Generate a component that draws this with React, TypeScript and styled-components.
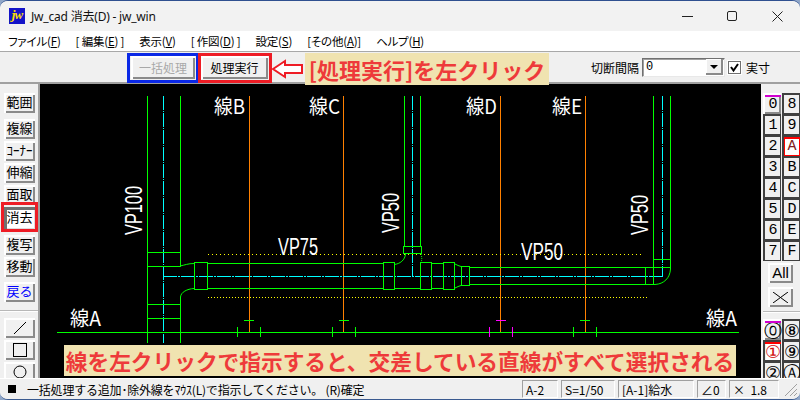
import styled, { createGlobalStyle } from 'styled-components'

const UI_FONT = `"Noto Sans CJK JP", "Liberation Sans", sans-serif`
const FACE = '#f0f0f0'

const GlobalStyle = createGlobalStyle`
  html, body {
    margin: 0;
    padding: 0;
    width: 800px;
    height: 400px;
    overflow: hidden;
    background: #8fa6c8;
  }
  * {
    box-sizing: border-box;
  }
`

const Window = styled.div`
  position: relative;
  width: 800px;
  height: 400px;
  display: flex;
  flex-direction: column;
  overflow: hidden;
  background: ${FACE};
  border-radius: 8px;
  border-top: 1px solid #2f5090;
  border-bottom: 1px solid #3a5a90;
  font-family: ${UI_FONT};
  font-size: 12px;
  color: #000;
`

const TitleBar = styled.div`
  height: 30px;
  flex: none;
  display: flex;
  align-items: center;
  padding-left: 9px;
  background: #f2f2f2;
`

const AppIcon = styled.div`
  width: 16px;
  height: 16px;
  background: #1414c8;
  color: #ffe000;
  font: italic bold 13px/14px "Liberation Serif", serif;
  text-align: center;
  letter-spacing: -1px;
`

const Title = styled.div`
  margin-left: 6px;
  font-family: "Noto Sans", "Noto Sans CJK JP", sans-serif;
  font-size: 12px;
  letter-spacing: -0.2px;
  color: #111;
  flex: 1;
`

const WinButtons = styled.div`
  display: flex;
  align-items: center;
  gap: 34px;
  padding-right: 17px;

  svg {
    display: block;
  }
`

const MenuBar = styled.div`
  height: 21px;
  flex: none;
  display: flex;
  align-items: center;
  gap: 15px;
  padding-left: 8px;
  background: #fff;
  border-bottom: 1px solid #a8a8a8;
  font-size: 11.5px;
  font-feature-settings: "palt";
  letter-spacing: -0.2px;
`

const MenuItem = styled.span`
  u {
    text-underline-offset: 1px;
  }
`

const ToolBar = styled.div`
  height: 32px;
  flex: none;
  display: flex;
  align-items: center;
  padding-left: 131px;
  background: ${FACE};
  border-bottom: 2px solid #a0a0a0;
`

const RaisedBox = styled.button<{ $disabled?: boolean }>`
  padding: 0;
  font-family: ${UI_FONT};
  background: ${FACE};
  border: none;
  color: ${({ $disabled }) => ($disabled ? '#a8a8a8' : '#000')};
  box-shadow: inset 2px 2px 0 #fff, inset -2px -2px 0 #8a8a8a;
`

const CommandButton = styled(RaisedBox)<{ $w: number }>`
  width: ${({ $w }) => $w}px;
  height: 23px;
  font-size: 12px;
  margin-right: 6px;
`

const IntervalGroup = styled.div`
  margin-left: auto;
  display: flex;
  align-items: center;
  padding-right: 30px;
`

const FieldLabel = styled.span`
  font-size: 12px;
  margin-right: 3px;
`

const Combo = styled.div`
  width: 83px;
  height: 19px;
  display: flex;
  align-items: center;
  justify-content: space-between;
  padding-left: 3px;
  background: #fff;
  border: 1px solid;
  border-color: #707070 #e8e8e8 #e8e8e8 #707070;
  box-shadow: inset 1px 1px 0 #a0a0a0;
  font: 12px "Liberation Mono", monospace;
`

const ComboArrow = styled.div`
  width: 17px;
  height: 16px;
  margin-right: 1px;
  display: flex;
  align-items: center;
  justify-content: center;
  background: ${FACE};
  box-shadow: inset -2px -2px 0 #8a8a8a, inset 1px 1px 0 #fff;

  &::after {
    content: '';
    border-left: 4px solid transparent;
    border-right: 4px solid transparent;
    border-top: 4px solid #000;
  }
`

const Check = styled.div`
  width: 13px;
  height: 13px;
  margin: 0 5px 0 3px;
  background: #fff;
  border: 1px solid #707070;
  box-shadow: 0 0 0 1px #fff;

  svg {
    display: block;
  }
`

const Main = styled.div`
  flex: 1;
  min-height: 0;
  display: flex;
`

const SideBar = styled.div<{ $w: number }>`
  width: ${({ $w }) => $w}px;
  flex: none;
  display: flex;
  flex-direction: column;
  padding-top: 9px;
  overflow: hidden;
  background: ${FACE};
`

const LeftBar = styled(SideBar)`
  align-items: flex-start;
  padding-left: 4px;
  border-right: 2px solid #a0a0a0;
`

const ToolGroup = styled.div<{ $mb: number }>`
  display: flex;
  flex-direction: column;
  gap: 2px;
  margin-bottom: ${({ $mb }) => $mb}px;
`

const ToolButton = styled(RaisedBox)<{ $active?: boolean; $blue?: boolean }>`
  width: 31px;
  height: ${({ $active }) => ($active ? 22 : 20)}px;
  flex: none;
  padding-bottom: 3px;
  font-size: 13px;
  line-height: 17px;
  white-space: nowrap;
  color: ${({ $blue }) => ($blue ? '#0000ff' : '#000')};
  background: ${({ $active }) => ($active ? '#fff' : FACE)};
  box-shadow: ${({ $active }) =>
    $active
      ? 'inset 3px 3px 0 #707070, inset -1px -1px 0 #ddd'
      : 'inset 2px 2px 0 #fff, inset -2px -2px 0 #8a8a8a'};
  display: flex;
  align-items: center;
  justify-content: center;
`

const Separator = styled.div<{ $mb: number }>`
  flex: none;
  align-self: stretch;
  height: 2px;
  margin-bottom: ${({ $mb }) => $mb}px;
  background: #b8b8b8;
  border-bottom: 1px solid #fff;
`

const LeftSeparator = styled(Separator)`
  margin-left: -4px;
`

const DrawButton = styled(RaisedBox)`
  width: 31px;
  height: 20px;
  flex: none;
  display: flex;
  align-items: center;
  justify-content: center;

  svg {
    display: block;
  }
`

const Canvas = styled.div`
  flex: 1;
  min-width: 0;
  background: #000;

  svg {
    display: block;
  }
`

const RightBar = styled(SideBar)`
  padding-left: 2px;
  align-items: center;
`

const LayerGrid = styled.div<{ $mb: number }>`
  display: grid;
  grid-template-columns: 18px 18px;
  grid-auto-rows: 21px;
  column-gap: 1px;
  margin-bottom: ${({ $mb }) => $mb}px;
  align-self: flex-start;
`

const LayerKey = styled.div<{ $raised?: boolean; $bar?: string; $red?: boolean; $round?: boolean; $pressed?: boolean }>`
  position: relative;
  display: flex;
  align-items: center;
  justify-content: center;
  background: ${({ $red, $pressed }) => ($red || $pressed ? '#fff' : FACE)};
  font-family: ${({ $round }) => ($round ? `"DejaVu Sans", sans-serif` : `"Liberation Mono", monospace`)};
  font-size: ${({ $round }) => ($round ? 18 : 15)}px;
  line-height: 15px;
  color: ${({ $pressed, $red }) => ($pressed ? '#d01010' : $red ? '#802020' : '#000')};
  border-top: 2px solid ${({ $raised }) => ($raised ? '#fff' : '#404040')};
  border-left: 2px solid ${({ $raised }) => ($raised ? '#fff' : '#404040')};
  box-shadow: ${({ $raised, $red }) =>
    $raised
      ? 'inset -2px -2px 0 #8a8a8a'
      : $red
        ? 'inset 0 0 0 1px #f00'
        : 'inset -1px -1px 0 #404040, inset 1px 1px 0 #f0f0f0'};

  &::before {
    content: '';
    display: ${({ $bar }) => ($bar ? 'block' : 'none')};
    position: absolute;
    left: 0;
    right: 0;
    top: 0;
    height: 2px;
    background: ${({ $bar }) => $bar};
  }
`

const WideKey = styled(RaisedBox)`
  width: 25px;
  height: 20px;
  flex: none;
  margin: 0 0 4px 5px;
  align-self: flex-start;
  font-size: 15px;
  line-height: 18px;
  display: flex;
  align-items: center;
  justify-content: center;
  font-family: "Liberation Sans", sans-serif;

  svg {
    display: block;
  }
`

const StatusBar = styled.div`
  height: 21px;
  flex: none;
  display: flex;
  align-items: center;
  padding-left: 8px;
  background: ${FACE};
  border-top: 1px solid #fff;
  font-size: 12px;
`

const Bullet = styled.div`
  width: 8px;
  height: 8px;
  margin-right: 11px;
  background: #000;
`

const StatusText = styled.div`
  flex: 1;
  white-space: pre;
  letter-spacing: -0.2px;
`

const StatusCell = styled.div<{ $w: number }>`
  width: ${({ $w }) => $w}px;
  height: 18px;
  margin-right: 3px;
  padding-left: 3px;
  display: flex;
  align-items: center;
  white-space: pre;
  border-top: 1px solid #a0a0a0;
  border-left: 1px solid #a0a0a0;
  border-right: 1px solid #fff;
  border-bottom: 1px solid #fff;
`

const Grip = styled.div`
  width: 16px;
  height: 16px;
  margin-right: 2px;

  svg {
    display: block;
  }
`

// annotations pasted on top of the screenshot
const Frame = styled.div<{ $color: string; $x: number; $y: number; $w: number; $h: number }>`
  position: absolute;
  left: ${({ $x }) => $x}px;
  top: ${({ $y }) => $y}px;
  width: ${({ $w }) => $w}px;
  height: ${({ $h }) => $h}px;
  border: 3px solid ${({ $color }) => $color};
  pointer-events: none;
`

const Note = styled.div<{ $x: number; $y: number; $w: number; $h: number; $size: number }>`
  position: absolute;
  left: ${({ $x }) => $x}px;
  top: ${({ $y }) => $y}px;
  width: ${({ $w }) => $w}px;
  height: ${({ $h }) => $h}px;
  display: flex;
  align-items: center;
  justify-content: center;
  white-space: nowrap;
  background: #f0e3b0;
  color: #ee3a3a;
  font-family: ${UI_FONT};
  font-weight: 700;
  font-size: ${({ $size }) => $size}px;
`

const ArrowMark = styled.svg`
  position: absolute;
  left: 270px;
  top: 57px;
`

const CadText = styled.text`
  fill: #fff;
  font-family: ${UI_FONT};
  font-size: 20px;
`

const PipeText = styled.text`
  fill: #fff;
  font-family: "Liberation Sans", sans-serif;
  font-size: 24px;
`

const GREEN = '#00ff00'
const CYAN = '#00ffff'
const ORANGE = '#ff8000'
const YELLOW = '#ffff00'
const MAGENTA = '#ff00ff'

const greenPaths = [
  // left riser
  'M147.5 96V343', 'M180.5 96V266', 'M180.5 297V343',
  'M147.5 252.5H180.5', 'M147.5 266.5H180.5', 'M147.5 304.5H180.5', 'M147.5 318.5H180.5',
  // VP75 run
  'M207 263.5H383', 'M207 288.5H383', 'M394 288.5H420', 'M432 263.5H443', 'M432 288.5H443',
  // middle riser
  'M404.5 96V246', 'M420.5 96V246', 'M420.5 263V264',
  // VP50 run
  'M469 267.5H670', 'M469 284.5H655',
  'M645.5 267V284', 'M653.5 96V284', 'M670.5 96V269', 'M653.5 259.5H670.5',
  // baseline
  'M57 332.5H739',
  // ticks
  'M244 320.5H254', 'M237.5 327V337', 'M260.5 327V337',
  'M339 320.5H349', 'M332.5 327V337', 'M355.5 327V337',
  'M580 320.5H590', 'M573.5 327V337', 'M596.5 327V337',
]

const greenCurves = [
  'M180 266 C185 265 188 263.5 194 263.5',
  'M180.5 297 C181 292 187 289 194 288.5',
  'M405.5 254 C405 260 400 264 394 264.5',
  'M655 284.5 C664 284 670 278 670.5 269',
  'M455 264 C457 265 459 266 461 266.5',
  'M455 288 C457 287 459 286 461 285.5',
]

const greenRects = [
  [194.5, 262.5, 13, 27],
  [383.5, 262.5, 11, 27],
  [420.5, 262.5, 11, 27],
  [443.5, 262.5, 11, 27],
  [461.5, 266.5, 8, 19],
  [403.5, 246.5, 18, 7],
]

const orangeX = [249.5, 343.5, 500.5, 585.5]

const CadDrawing = () => (
  <svg width={721} height={294} viewBox="40 84 721 294" fill="none">
    <g shapeRendering="crispEdges">
      {orangeX.map((x) => <path key={x} d={`M${x} 96V332`} stroke={ORANGE} />)}
      <path d="M163.5 96V343M412.5 96V276M662.5 96V276" stroke={CYAN} strokeDasharray="14 1 1 1" />
      <path d="M163 276.5H663" stroke={CYAN} strokeDasharray="14 1 2 1" />
      <path d="M208 254.5H644" stroke={YELLOW} strokeDasharray="1 3" />
      <path d="M208 297.5H647" stroke={YELLOW} strokeDasharray="1 2" />
      {greenPaths.map((d) => <path key={d} d={d} stroke={GREEN} />)}
      {greenRects.map(([x, y, w, h]) => (
        <rect key={x} x={x} y={y} width={w} height={h} stroke={GREEN} />
      ))}
      <path d="M496 320.5H506M489.5 327V337M512.5 327V337" stroke={MAGENTA} />
    </g>
    {greenCurves.map((d) => <path key={d} d={d} stroke={GREEN} />)}
    <path d="M421 254C422 257 422 260 421 263" stroke={GREEN} strokeDasharray="1 1" />

    <CadText x={214} y={114} textLength={31} lengthAdjust="spacingAndGlyphs">線B</CadText>
    <CadText x={309} y={114} textLength={31} lengthAdjust="spacingAndGlyphs">線C</CadText>
    <CadText x={466} y={114} textLength={31} lengthAdjust="spacingAndGlyphs">線D</CadText>
    <CadText x={552} y={114} textLength={30} lengthAdjust="spacingAndGlyphs">線E</CadText>
    <CadText x={70} y={326} textLength={31} lengthAdjust="spacingAndGlyphs">線A</CadText>
    <CadText x={706} y={326} textLength={31} lengthAdjust="spacingAndGlyphs">線A</CadText>

    <PipeText x={278} y={255} textLength={40} lengthAdjust="spacingAndGlyphs">VP75</PipeText>
    <PipeText x={521} y={260} textLength={42} lengthAdjust="spacingAndGlyphs">VP50</PipeText>
    <PipeText x={142} y={235} transform="rotate(-90 142 235)" textLength={49} lengthAdjust="spacingAndGlyphs">VP100</PipeText>
    <PipeText x={399} y={233} transform="rotate(-90 399 233)" textLength={40} lengthAdjust="spacingAndGlyphs">VP50</PipeText>
    <PipeText x={648} y={235} transform="rotate(-90 648 235)" textLength={40} lengthAdjust="spacingAndGlyphs">VP50</PipeText>
  </svg>
)

const layerRows = [
  ['0', '8'], ['1', '9'], ['2', 'A'], ['3', 'B'],
  ['4', 'C'], ['5', 'D'], ['6', 'E'], ['7', 'F'],
]

const menu = [
  ['ファイル(', 'F', ')'], ['[ 編集(', 'E', ') ]'], ['表示(', 'V', ')'], ['[ 作図(', 'D', ') ]'],
  ['設定(', 'S', ')'], ['[その他(', 'A', ')]'], ['ヘルプ(', 'H', ')'],
]

const App = (): JSX.Element => (
  <Window>
    <GlobalStyle />
    <TitleBar>
      <AppIcon>jw</AppIcon>
      <Title>Jw_cad 消去(D) - jw_win</Title>
      <WinButtons>
        <svg width={11} height={11} stroke="#222"><path d="M0 5.5H11" /></svg>
        <svg width={11} height={11} fill="none" stroke="#222"><rect x={0.5} y={0.5} width={9} height={9} rx={1.5} /></svg>
        <svg width={11} height={11} stroke="#222"><path d="M0.5 0.5L10.5 10.5M10.5 0.5L0.5 10.5" /></svg>
      </WinButtons>
    </TitleBar>
    <MenuBar>
      {menu.map(([a, k, b]) => (
        <MenuItem key={k}>{a}<u>{k}</u>{b}</MenuItem>
      ))}
    </MenuBar>
    <ToolBar>
      <CommandButton $w={64} $disabled>一括処理</CommandButton>
      <CommandButton $w={67}>処理実行</CommandButton>
      <IntervalGroup>
        <FieldLabel>切断間隔</FieldLabel>
        <Combo>0<ComboArrow /></Combo>
        <Check>
          <svg width={11} height={11} fill="none" stroke="#000" strokeWidth={2}><path d="M2 5L4.5 8.5L9 2" /></svg>
        </Check>
        <span>実寸</span>
      </IntervalGroup>
    </ToolBar>
    <Main>
      <LeftBar $w={40}>
        <ToolGroup $mb={6}><ToolButton>範囲</ToolButton></ToolGroup>
        <ToolGroup $mb={6}>
          <ToolButton>複線</ToolButton>
          <ToolButton>ｺｰﾅｰ</ToolButton>
          <ToolButton>伸縮</ToolButton>
          <ToolButton>面取</ToolButton>
          <ToolButton $active>消去</ToolButton>
        </ToolGroup>
        <ToolGroup $mb={5}>
          <ToolButton>複写</ToolButton>
          <ToolButton>移動</ToolButton>
        </ToolGroup>
        <ToolGroup $mb={8}><ToolButton $blue>戻る</ToolButton></ToolGroup>
        <LeftSeparator $mb={6} />
        <ToolGroup $mb={0}>
          <DrawButton>
            <svg width={16} height={14} stroke="#000"><path d="M2 13L14 1" /></svg>
          </DrawButton>
          <DrawButton>
            <svg width={16} height={14} fill="none" stroke="#000"><rect x={1.5} y={0.5} width={13} height={13} /></svg>
          </DrawButton>
          <DrawButton>
            <svg width={16} height={14} fill="none" stroke="#000"><circle cx={8} cy={7} r={6} /></svg>
          </DrawButton>
        </ToolGroup>
      </LeftBar>
      <Canvas><CadDrawing /></Canvas>
      <RightBar $w={39}>
        <LayerGrid $mb={2}>
          {layerRows.flat().map((c) => (
            <LayerKey
              key={c}
              $raised={c === '0'}
              $bar={c === '0' ? '#d000d0' : c === 'A' ? '#ff0000' : undefined}
              $red={c === 'A'}
            >
              {c}
            </LayerKey>
          ))}
        </LayerGrid>
        <WideKey>All</WideKey>
        <WideKey>
          <svg width={15} height={11} stroke="#000"><path d="M0 0L15 11M15 0L0 11" /></svg>
        </WideKey>
        <Separator $mb={6} />
        <LayerGrid $mb={0}>
          {['⓪', '⑧', '①', '⑨', '②', 'Ⓐ'].map((c) => (
            <LayerKey
              key={c}
              $round
              $raised={c === '⓪'}
              $pressed={c === '①'}
              $bar={c === '⓪' ? '#d000d0' : c === '①' ? '#ff0000' : undefined}
            >
              {c}
            </LayerKey>
          ))}
        </LayerGrid>
      </RightBar>
    </Main>
    <StatusBar>
      <Bullet />
      <StatusText>一括処理する追加･除外線をﾏｳｽ(L)で指示してください。 (R)確定</StatusText>
      <StatusCell $w={36}>A-2</StatusCell>
      <StatusCell $w={54}>S=1/50</StatusCell>
      <StatusCell $w={76}>[A-1]給水</StatusCell>
      <StatusCell $w={29}>∠0</StatusCell>
      <StatusCell $w={50}>×  1.8</StatusCell>
      <Grip>
        <svg width={16} height={16} stroke="#a0a0a0"><path d="M15 3L3 15M15 8L8 15M15 12L12 15" /></svg>
      </Grip>
    </StatusBar>

    <Frame $color="#0a28e6" $x={127} $y={52} $w={72} $h={30} />
    <Frame $color="#ee1c25" $x={198} $y={52} $w={74} $h={30} />
    <Frame $color="#ee1c25" $x={1} $y={201} $w={37} $h={30} />
    <ArrowMark width={34} height={22} fill="#fff" stroke="#ee1c25" strokeWidth={2}>
      <path d="M3 11L15 3V7H32V15H15V19Z" />
    </ArrowMark>
    <Note $x={305} $y={52} $w={244} $h={32} $size={22}>[処理実行]を左クリック</Note>
    <Note $x={64} $y={344} $w={672} $h={31} $size={21.7}>線を左クリックで指示すると、交差している直線がすべて選択される</Note>
  </Window>
)

export default App
